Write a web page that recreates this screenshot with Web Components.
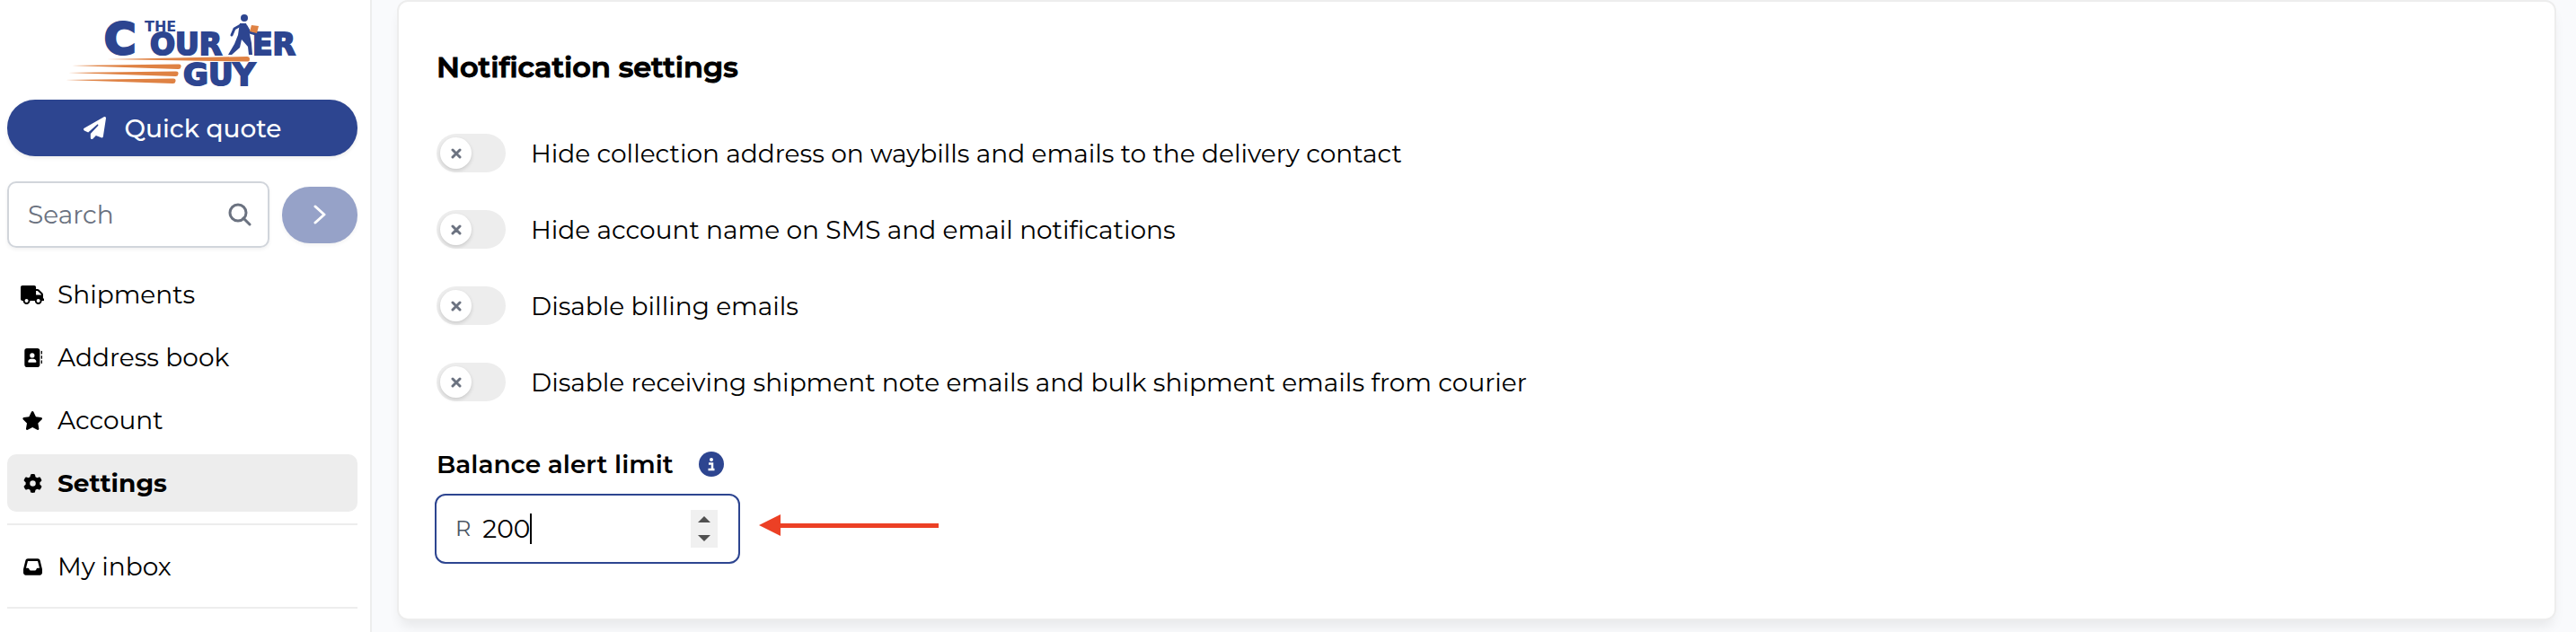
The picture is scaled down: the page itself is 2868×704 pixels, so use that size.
<!DOCTYPE html>
<html lang="en">
<head>
<meta charset="utf-8">
<title>Notification settings</title>
<style>
  * { box-sizing: border-box; }
  body {
    --navy: #2d4590;
    --orange: #df8244;
    --line: #ededed;
    --muted: #6b7280;
    margin: 0;
    min-height: 100vh;
    display: flex;
    background: #f9fafc;
    color: #000;
    font: 400 28px/40px Montserrat, Inter, "Liberation Sans", sans-serif;
  }
  main {
    flex: 1;
    padding: 0 22px 12px 28px;
  }
</style>
</head>
<body>
  <app-sidebar>
    <brand-logo></brand-logo>
    <quick-quote>Quick quote</quick-quote>
    <search-box></search-box>
    <nav-group>
      <nav-item icon="truck">Shipments</nav-item>
      <nav-item icon="book">Address book</nav-item>
      <nav-item icon="star">Account</nav-item>
      <nav-item icon="gear" active>Settings</nav-item>
    </nav-group>
    <nav-group>
      <nav-item icon="inbox">My inbox</nav-item>
    </nav-group>
  </app-sidebar>
  <main>
    <settings-card>
      <span slot="title">Notification settings</span>
      <toggle-row>Hide collection address on waybills and emails to the delivery contact</toggle-row>
      <toggle-row>Hide account name on SMS and email notifications</toggle-row>
      <toggle-row>Disable billing emails</toggle-row>
      <toggle-row>Disable receiving shipment note emails and bulk shipment emails from courier</toggle-row>
      <amount-field slot="footer" currency="R" value="200">Balance alert limit</amount-field>
      <pointer-arrow slot="footer"></pointer-arrow>
    </settings-card>
  </main>

<script>
(function () {
  const icons = {
    truck: ["0 0 640 512", "M624 352h-16V243.9c0-12.7-5.1-24.9-14.1-33.9L494 110.1c-9-9-21.2-14.1-33.9-14.1H416V48c0-26.5-21.5-48-48-48H48C21.5 0 0 21.5 0 48v320c0 26.5 21.5 48 48 48h16c0 53 43 96 96 96s96-43 96-96h128c0 53 43 96 96 96s96-43 96-96h48c8.8 0 16-7.2 16-16v-32c0-8.8-7.2-16-16-16zM160 464c-26.5 0-48-21.5-48-48s21.5-48 48-48 48 21.5 48 48-21.5 48-48 48zm320 0c-26.5 0-48-21.5-48-48s21.5-48 48-48 48 21.5 48 48-21.5 48-48 48zm80-208H416V144h44.1l99.9 99.9V256z"],
    book: ["0 0 512 512", "M96 0C60.7 0 32 28.7 32 64V448c0 35.3 28.7 64 64 64H384c35.3 0 64-28.7 64-64V64c0-35.3-28.7-64-64-64H96zM208 288h64c44.2 0 80 35.8 80 80c0 8.8-7.2 16-16 16H144c-8.8 0-16-7.2-16-16c0-44.2 35.8-80 80-80zm-32-96a64 64 0 1 1 128 0 64 64 0 1 1 -128 0zM512 80c0-8.8-7.2-16-16-16s-16 7.2-16 16v64c0 8.8 7.2 16 16 16s16-7.2 16-16V80zM496 192c-8.8 0-16 7.2-16 16v64c0 8.8 7.2 16 16 16s16-7.2 16-16V208c0-8.8-7.2-16-16-16zm16 144c0-8.8-7.2-16-16-16s-16 7.2-16 16v64c0 8.8 7.2 16 16 16s16-7.2 16-16V336z"],
    star: ["16 0 544 512", "M316.9 18C311.6 7 300.4 0 288.1 0s-23.4 7-28.8 18L195 150.3 51.4 171.5c-12 1.8-22 10.2-25.7 21.7s-.7 24.2 7.9 32.7L137.8 329 113.2 474.7c-2 12 3 24.2 12.9 31.3s23 8 33.8 2.3l128.3-68.5 128.3 68.5c10.8 5.7 23.9 4.9 33.8-2.3s14.9-19.3 12.9-31.3L438.5 329 542.7 225.9c8.6-8.5 11.7-21.2 7.9-32.7s-13.7-19.9-25.7-21.7L381.2 150.3 316.9 18z"],
    gear: ["0 0 512 512", "M495.9 166.6c3.2 8.7 .5 18.4-6.4 24.6l-43.3 39.4c1.1 8.3 1.7 16.8 1.7 25.4s-.6 17.1-1.7 25.4l43.3 39.4c6.9 6.2 9.6 15.9 6.4 24.6c-4.4 11.9-9.7 23.3-15.8 34.3l-4.7 8.1c-6.6 11-14 21.4-22.1 31.2c-5.9 7.2-15.7 9.6-24.5 6.8l-55.7-17.7c-13.4 10.3-28.2 18.9-44 25.4l-12.5 57.1c-2 9.1-9 16.3-18.2 17.8c-13.8 2.3-28 3.5-42.5 3.5s-28.7-1.2-42.5-3.5c-9.2-1.5-16.2-8.7-18.2-17.8l-12.5-57.1c-15.8-6.5-30.6-15.1-44-25.4L83.1 425.9c-8.8 2.8-18.6 .3-24.5-6.8c-8.1-9.8-15.5-20.2-22.1-31.2l-4.7-8.1c-6.1-11-11.4-22.4-15.8-34.3c-3.2-8.7-.5-18.4 6.4-24.6l43.3-39.4C64.6 273.1 64 264.6 64 256s.6-17.1 1.7-25.4L22.4 191.2c-6.9-6.2-9.6-15.9-6.4-24.6c4.4-11.9 9.7-23.3 15.8-34.3l4.7-8.1c6.6-11 14-21.4 22.1-31.2c5.9-7.2 15.7-9.6 24.5-6.8l55.7 17.7c13.4-10.3 28.2-18.9 44-25.4l12.5-57.1c2-9.1 9-16.3 18.2-17.8C227.3 1.2 241.5 0 256 0s28.7 1.2 42.5 3.5c9.2 1.5 16.2 8.7 18.2 17.8l12.5 57.1c15.8 6.5 30.6 15.1 44 25.4l55.7-17.7c8.8-2.8 18.6-.3 24.5 6.8c8.1 9.8 15.5 20.2 22.1 31.2l4.7 8.1c6.1 11 11.4 22.4 15.8 34.3zM256 336a80 80 0 1 0 0-160 80 80 0 1 0 0 160z"],
    inbox: ["0 0 512 512", "M121 32C91.6 32 66 52 58.9 80.5L1.9 308.4C.6 313.5 0 318.7 0 323.9V416c0 35.3 28.7 64 64 64H448c35.3 0 64-28.7 64-64V323.9c0-5.2-.6-10.4-1.9-15.5l-57-227.9C446 52 420.4 32 391 32H121zm0 64H391l48 192H387.8c-12.1 0-23.2 6.8-28.6 17.7l-14.3 28.6c-5.4 10.8-16.5 17.7-28.6 17.7H195.8c-12.1 0-23.2-6.8-28.6-17.7l-14.3-28.6c-5.4-10.8-16.5-17.7-28.6-17.7H73L121 96z"],
    plane: ["0 0 512 512", "M498.1 5.6c10.1 7 15.4 19.1 13.5 31.2l-64 416c-1.5 9.7-7.4 18.2-16 23s-18.9 5.4-28 1.6L284 427.7l-68.5 74.1c-8.9 9.7-22.9 12.9-35.2 8.1S160 493.2 160 480V396.4c0-4 1.5-7.8 4.2-10.7L331.8 202.8c5.8-6.3 5.6-16-.4-22s-15.7-6.4-22-.7L106 360.8 17.7 316.6C7.1 311.3 .3 300.7 0 288.9s5.9-22.8 16.1-28.7l448-256c10.7-6.1 23.9-5.5 34 1.4z"]
  };

  function icon(name, height) {
    const [box, path] = icons[name];
    return `<svg viewBox="${box}" height="${height}" fill="currentColor" aria-hidden="true"><path d="${path}"/></svg>`;
  }

  const base = `
    *, :host { box-sizing: border-box; }
    button, input { font: inherit; color: inherit; margin: 0; }
    svg { display: block; flex: none; }
  `;

  // every element below only differs in its markup
  class BaseElement extends HTMLElement {
    constructor() {
      super();
      this.attachShadow({ mode: "open" });
    }

    connectedCallback() {
      this.shadowRoot.innerHTML = `<style>${base}</style>` + this.render();
    }
  }

  class AppSidebar extends BaseElement {
    render() {
      return `
        <style>
          :host {
            display: flex;
            flex: none;
            flex-direction: column;
            width: 414px;
            padding: 10px 14px 0 8px;
            background: #fff;
            border-right: 2px solid var(--line);
          }
        </style>
        <slot></slot>
      `;
    }
  }

  class BrandLogo extends BaseElement {
    render() {
      return `
        <style>
          :host { display: block; height: 101px; }
          svg { margin: 0 auto; }
          .word {
            fill: var(--navy);
            stroke: var(--navy);
            font-family: "DejaVu Sans", sans-serif;
            font-weight: 700;
          }
          .speed { fill: var(--orange); }
          .man { fill: none; stroke: var(--navy); stroke-linecap: round; stroke-linejoin: round; }
        </style>
        <svg viewBox="-2 0 270 98" width="270" height="98" role="img" aria-label="The Courier Guy">
          <g class="word">
            <text x="46" y="50" font-size="48" stroke-width="3">C</text>
            <text x="91" y="25" font-size="16" stroke-width="0">THE</text>
            <text x="97" y="51" font-size="33" stroke-width="2">OUR</text>
            <text x="211" y="51" font-size="33" stroke-width="2">ER</text>
            <text x="134" y="85" font-size="34" stroke-width="2">GUY</text>
          </g>
          <g class="speed">
            <path d="M49 56 205 53q3 0 3 3t-3 2.500z"/>
            <path d="M10 63 129 61.500q3 0 2.500 3t-3.500 2.500z"/>
            <path d="M6 71 126 69.500q3 0 2.500 3t-3.500 2.500z"/>
            <path d="M3 79 123 77.500q3 0 2.500 3t-3.500 2.500z"/>
          </g>
          <path d="M201 19 199 32 196 40 187 50M201 30 208 40 208 50" fill="none" stroke="#fff" stroke-width="8"/>
          <path d="M197 16h7l4 12 2 10 1 13h-4l-1-9-7-8-2 9-9 8h-4l7-12 4-10 1-7z" fill="var(--navy)"/>
          <g class="man">
            <path d="M198 18 191 22 188 29" stroke-width="3"/>
            <path d="M204 19 208 26 215 28" stroke-width="3"/>
          </g>
          <circle cx="202" cy="10" r="4" fill="var(--navy)"/>
          <path d="M210 18 218 19 216 27 208 25z" fill="var(--orange)"/>
        </svg>
      `;
    }
  }

  class QuickQuote extends BaseElement {
    render() {
      return `
        <style>
          :host { display: block; }
          button {
            display: flex;
            align-items: center;
            justify-content: center;
            gap: 21px;
            width: 100%;
            height: 63px;
            padding: 0;
            border: 0;
            border-radius: 31px;
            background: var(--navy);
            color: #fff;
            font-weight: 500;
            box-shadow: 0 2px 4px rgba(0, 0, 0, .08);
          }
        </style>
        <button type="button">${icon("plane", 25)}<slot></slot></button>
      `;
    }
  }

  class SearchBox extends BaseElement {
    render() {
      return `
        <style>
          :host { display: block; }
          form {
            display: flex;
            align-items: center;
            gap: 14px;
            margin: 28px 0 20px;
          }
          label {
            display: flex;
            flex: 1;
            min-width: 0;
            align-items: center;
            height: 74px;
            padding: 0 18px 0 21px;
            border: 2px solid #d1d5db;
            border-radius: 10px;
            color: var(--muted);
            box-shadow: 0 2px 4px rgba(0, 0, 0, .06);
          }
          input {
            flex: 1;
            min-width: 0;
            padding: 0;
            border: 0;
            outline: 0;
            background: none;
          }
          input::placeholder { color: var(--muted); }
          button {
            display: grid;
            flex: none;
            place-items: center;
            width: 84px;
            height: 63px;
            padding: 0;
            border: 0;
            border-radius: 31px;
            background: #96a2c8;
            box-shadow: 0 2px 4px rgba(0, 0, 0, .05);
          }
        </style>
        <form>
          <label>
            <input type="text" placeholder="Search" aria-label="Search">
            <svg viewBox="0 0 26 26" width="26" height="26" fill="none" stroke="currentColor" stroke-width="3" stroke-linecap="round">
              <circle cx="11" cy="11" r="9"/>
              <path d="M17 17 24 24"/>
            </svg>
          </label>
          <button type="button" aria-label="Go">
            <svg viewBox="0 0 14 22" width="14" height="22" fill="none" stroke="#fff" stroke-width="3" stroke-linecap="round" stroke-linejoin="round">
              <path d="M2 2 12 11 2 20"/>
            </svg>
          </button>
        </form>
      `;
    }
  }

  class NavGroup extends BaseElement {
    render() {
      return `
        <style>
          :host {
            display: block;
            margin-bottom: 14px;
            padding-bottom: 13px;
            border-bottom: 2px solid var(--line);
          }
          nav { display: flex; flex-direction: column; gap: 6px; }
        </style>
        <nav><slot></slot></nav>
      `;
    }
  }

  class NavItem extends BaseElement {
    render() {
      return `
        <style>
          :host { display: block; }
          a {
            display: flex;
            align-items: center;
            gap: 14px;
            height: 64px;
            padding: 0 14px;
            border-radius: 10px;
            color: inherit;
            text-decoration: none;
          }
          :host([active]) a { background: #ededed; font-weight: 700; }
          .icon { display: grid; place-items: center; width: 28px; }
        </style>
        <a href="#"><span class="icon">${icon(this.getAttribute("icon"), 21)}</span><slot></slot></a>
      `;
    }
  }

  class SettingsCard extends BaseElement {
    render() {
      return `
        <style>
          :host {
            display: block;
            padding: 53px 40px 61px 42px;
            background: #fff;
            border: 2px solid var(--line);
            border-radius: 12px;
            box-shadow: 0 10px 14px -4px rgba(0, 0, 0, .08);
          }
          h2 {
            margin: 0 0 54px;
            font-size: 32px;
            line-height: 40px;
            font-weight: 600;
            -webkit-text-stroke: 1px currentColor;
          }
          .rows { display: grid; gap: 42px; }
          .footer { display: flex; align-items: flex-end; gap: 21px; margin-top: 50px; }
        </style>
        <h2><slot name="title"></slot></h2>
        <div class="rows"><slot></slot></div>
        <div class="footer"><slot name="footer"></slot></div>
      `;
    }
  }

  class ToggleRow extends BaseElement {
    render() {
      return `
        <style>
          :host { display: block; }
          label { display: flex; align-items: center; gap: 28px; height: 43px; }
          .switch {
            display: grid;
            flex: none;
            align-items: center;
            width: 77px;
            height: 43px;
            padding: 0 4px;
            border-radius: 22px;
            background: #ededed;
          }
          .switch > * { grid-area: 1 / 1; }
          input { width: 69px; height: 35px; opacity: 0; }
          .knob {
            display: grid;
            place-items: center;
            width: 35px;
            height: 35px;
            border-radius: 50%;
            background: #fff;
            box-shadow: 0 2px 4px rgba(0, 0, 0, .15);
            pointer-events: none;
          }
          input:checked + .knob { justify-self: end; }
        </style>
        <label>
          <span class="switch">
            <input type="checkbox" role="switch">
            <span class="knob">
              <svg viewBox="0 0 12 12" width="12" height="12" stroke="#6b7280" stroke-width="3" stroke-linecap="round">
                <path d="M2 2 10 10M10 2 2 10"/>
              </svg>
            </span>
          </span>
          <slot></slot>
        </label>
      `;
    }
  }

  class AmountField extends BaseElement {
    connectedCallback() {
      super.connectedCallback();
      const input = this.shadowRoot.querySelector("input");
      this.shadowRoot.querySelector(".up").addEventListener("click", () => input.stepUp());
      this.shadowRoot.querySelector(".down").addEventListener("click", () => input.stepDown());
    }

    render() {
      return `
        <style>
          :host { display: block; margin-left: -2px; }
          .head {
            display: flex;
            align-items: center;
            gap: 28px;
            margin-bottom: 13px;
            padding-left: 2px;
            font-weight: 600;
          }
          .box {
            display: flex;
            align-items: center;
            width: 340px;
            height: 78px;
            padding: 0 23px 0 21px;
            border: 2px solid var(--navy);
            border-radius: 12px;
            background: #fff;
          }
          .currency { margin-right: 13px; color: #4b5563; font-size: 24px; }
          input {
            field-sizing: content;
            padding: 0;
            border: 0;
            outline: 0;
            background: none;
            caret-color: transparent;
            appearance: textfield;
          }
          input::-webkit-inner-spin-button { display: none; }
          .caret { width: 2px; height: 34px; background: #000; }
          .spin { display: grid; width: 30px; margin-left: auto; }
          .spin button {
            display: grid;
            place-items: center;
            height: 21px;
            padding: 0;
            border: 0;
            background: #f0f0f0;
            color: #505050;
          }
        </style>
        <div class="head">
          <label for="amount"><slot></slot></label>
          <svg viewBox="0 0 28 28" width="28" height="28" role="img" aria-label="More information">
            <circle cx="14" cy="14" r="14" fill="var(--navy)"/>
            <circle cx="14" cy="9" r="2" fill="#fff"/>
            <path d="M11 13.500h4v6M10.500 20h7" fill="none" stroke="#fff" stroke-width="2.500"/>
          </svg>
        </div>
        <div class="box">
          <span class="currency">${this.getAttribute("currency")}</span>
          <input id="amount" type="number" value="${this.getAttribute("value")}">
          <span class="caret"></span>
          <span class="spin">
            <button class="up" type="button" aria-label="Increase">
              <svg viewBox="0 0 14 7" width="14" height="7" fill="currentColor"><path d="M7 0 14 7H0z"/></svg>
            </button>
            <button class="down" type="button" aria-label="Decrease">
              <svg viewBox="0 0 14 7" width="14" height="7" fill="currentColor"><path d="M0 0H14L7 7z"/></svg>
            </button>
          </span>
        </div>
      `;
    }
  }

  class PointerArrow extends BaseElement {
    render() {
      return `
        <style>
          :host { display: flex; align-items: center; height: 86px; }
        </style>
        <svg viewBox="0 0 200 24" width="200" height="24" fill="#ec4025" aria-hidden="true">
          <path d="M0 12 24 0V10H200V15H24V24z"/>
        </svg>
      `;
    }
  }

  customElements.define("app-sidebar", AppSidebar);
  customElements.define("brand-logo", BrandLogo);
  customElements.define("quick-quote", QuickQuote);
  customElements.define("search-box", SearchBox);
  customElements.define("nav-group", NavGroup);
  customElements.define("nav-item", NavItem);
  customElements.define("settings-card", SettingsCard);
  customElements.define("toggle-row", ToggleRow);
  customElements.define("amount-field", AmountField);
  customElements.define("pointer-arrow", PointerArrow);
})();
</script>
</body>
</html>
